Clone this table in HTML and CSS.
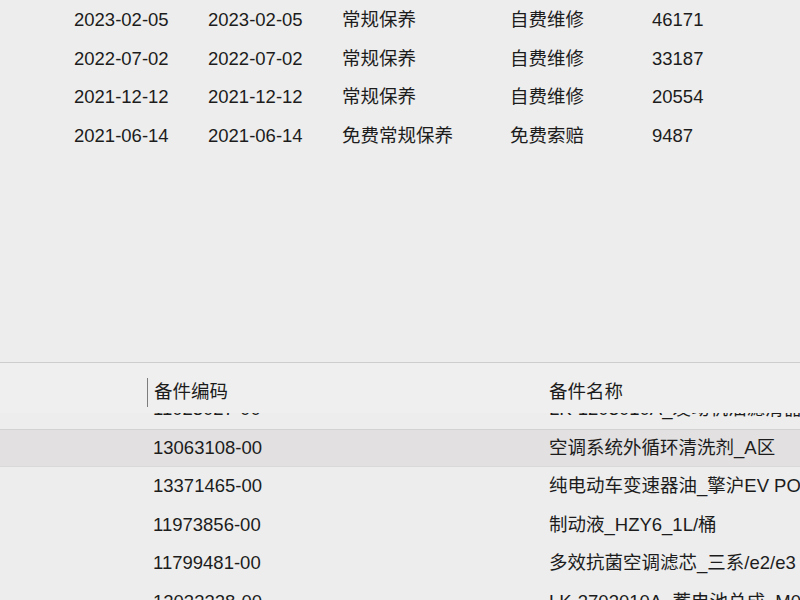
FILE: index.html
```html
<!DOCTYPE html>
<html lang="zh-CN">
<head>
  <meta charset="UTF-8" />
  <meta name="viewport" content="width=device-width, initial-scale=1.0" />
  <title>维修记录</title>
  <link rel="stylesheet" href="styles.css">
</head>
<body>
  <div class="records">
    <div class="rec-row">
      <span>2023-02-05</span><span>2023-02-05</span><span>常规保养</span><span>自费维修</span><span>46171</span>
    </div>
    <div class="rec-row">
      <span>2022-07-02</span><span>2022-07-02</span><span>常规保养</span><span>自费维修</span><span>33187</span>
    </div>
    <div class="rec-row">
      <span>2021-12-12</span><span>2021-12-12</span><span>常规保养</span><span>自费维修</span><span>20554</span>
    </div>
    <div class="rec-row">
      <span>2021-06-14</span><span>2021-06-14</span><span>免费常规保养</span><span>免费索赔</span><span>9487</span>
    </div>
  </div>

  <div class="parts">
    <div class="parts-head">
      <div class="cell blank"></div>
      <div class="cell code divided">备件编码</div>
      <div class="cell name">备件名称</div>
    </div>
    <div class="parts-body">
      <div class="rows">
        <div class="row">
          <div class="cell blank"></div>
          <div class="cell code">11023027-00</div>
          <div class="cell name">LK-1203010A_发动机油滤清器总成_...</div>
        </div>
        <div class="row selected">
          <div class="cell blank"></div>
          <div class="cell code">13063108-00</div>
          <div class="cell name">空调系统外循环清洗剂_A区</div>
        </div>
        <div class="row">
          <div class="cell blank"></div>
          <div class="cell code">13371465-00</div>
          <div class="cell name">纯电动车变速器油_擎沪EV POWER</div>
        </div>
        <div class="row">
          <div class="cell blank"></div>
          <div class="cell code">11973856-00</div>
          <div class="cell name">制动液_HZY6_1L/桶</div>
        </div>
        <div class="row">
          <div class="cell blank"></div>
          <div class="cell code">11799481-00</div>
          <div class="cell name">多效抗菌空调滤芯_三系/e2/e3</div>
        </div>
        <div class="row">
          <div class="cell blank"></div>
          <div class="cell code">12033328-00</div>
          <div class="cell name">LK-3703010A_蓄电池总成_M00</div>
        </div>
      </div>
    </div>
  </div>
</body>
</html>
```

FILE: styles.css
```css
html, body {
  margin: 0;
  height: 100%;
  overflow: hidden;
}
body {
  font-family: "Liberation Sans", "Noto Sans CJK SC", sans-serif;
  font-size: 18.5px;
  color: #1c1c1c;
  background: #ededed;
}
.records {
  height: 362px;
  box-sizing: border-box;
  padding: 1px 0 0 74px;
}
.rec-row {
  display: grid;
  grid-template-columns: 134px 134px 168px 142px auto;
  height: 38.7px;
  line-height: 38.7px;
  white-space: nowrap;
}
.parts {
  border-top: 1px solid #cdcdcd;
  height: 237px;
  display: flex;
  flex-direction: column;
}
.parts-head {
  display: flex;
  align-items: flex-start;
  height: 50px;
  box-sizing: border-box;
  padding-top: 15px;
  background: #efefef;
  flex: none;
}
.parts-head .cell {
  height: 29px;
  line-height: 27px;
}
.cell {
  white-space: nowrap;
  overflow: hidden;
  box-sizing: border-box;
}
.cell.blank {
  width: 147px;
  flex: none;
}
.cell.code {
  width: 396px;
  flex: none;
  padding-left: 6px;
}
.cell.name {
  flex: 1;
  padding-left: 6px;
  overflow: visible;
}
.cell.divided {
  border-left: 1px solid #7d7d7d;
}
.parts-body {
  flex: 1;
  overflow: hidden;
}
.rows {
  margin-top: -23px;
}
.row {
  display: flex;
  height: 38.5px;
  line-height: 38.5px;
  box-sizing: border-box;
}
.row.selected {
  background: #e2e0e0;
  border-top: 1px solid #d2d2d2;
  border-bottom: 1px solid #d9d9d9;
  line-height: 36.5px;
}
```
